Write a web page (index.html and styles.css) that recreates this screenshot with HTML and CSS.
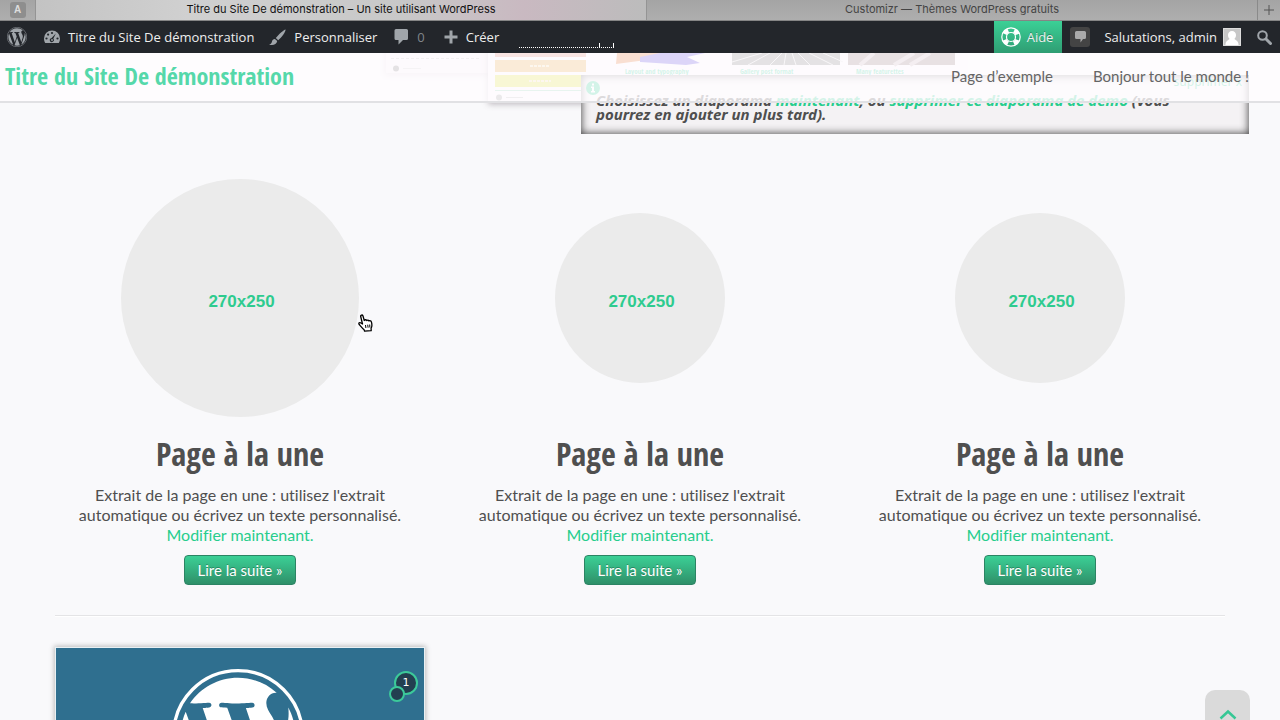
FILE: index.html
```html
<!DOCTYPE html>
<html lang="fr">
<head>
<meta charset="utf-8">
<title>Titre du Site De démonstration – Un site utilisant WordPress</title>
<link rel="stylesheet" href="styles.css">
</head>
<body>
<svg class="symbols" aria-hidden="true">
  <symbol id="wp" viewBox="0 0 24 24">
    <circle cx="12" cy="12" r="11.7" fill="none" stroke="currentColor" stroke-width=".6"/>
    <path fill="currentColor" transform="translate(.42 .42) scale(.965)" d="M21.469 6.825c.84 1.537 1.318 3.3 1.318 5.175 0 3.979-2.156 7.456-5.363 9.325l3.295-9.527c.615-1.54.82-2.771.82-3.864 0-.405-.026-.78-.07-1.11m-7.981.105c.647-.03 1.232-.105 1.232-.105.582-.075.514-.93-.067-.899 0 0-1.755.135-2.88.135-1.064 0-2.85-.15-2.85-.15-.585-.03-.661.855-.075.885 0 0 .54.061 1.125.09l1.68 4.605-2.37 7.08L5.354 6.9c.649-.03 1.234-.1 1.234-.1.585-.075.516-.93-.065-.896 0 0-1.746.138-2.874.138-.2 0-.438-.008-.69-.015C4.911 3.15 8.235 1.215 12 1.215c2.809 0 5.365 1.072 7.286 2.833-.046-.003-.091-.009-.141-.009-1.06 0-1.812.923-1.812 1.914 0 .89.513 1.643 1.06 2.531.411.72.89 1.643.89 2.977 0 .915-.354 1.994-.821 3.479l-1.075 3.585-3.9-11.61zM12 22.784c-1.059 0-2.081-.153-3.048-.437l3.237-9.406 3.315 9.087c.024.053.05.101.078.149-1.12.393-2.325.609-3.582.609M1.211 12c0-1.564.336-3.05.935-4.39L7.29 21.709C3.694 19.96 1.212 16.271 1.211 12"/>
  </symbol>
</svg>

<div class="tabs">
  <div class="tab tab-pinned"><span class="pin">A</span></div>
  <div class="tab tab-active">Titre du Site De démonstration – Un site utilisant WordPress</div>
  <div class="tab">Customizr — Thèmes WordPress gratuits</div>
  <button class="tab-new" aria-label="Nouvel onglet"><svg width="12" height="12" viewBox="0 0 12 12"><path d="M6 1v10M1 6h10" stroke="#555" fill="none"/></svg></button>
</div>

<nav class="adminbar">
  <a href="#" class="ab-logo" aria-label="WordPress"><svg width="20" height="20"><use href="#wp"/></svg></a>
  <a href="#" class="ab-item ab-site">
    <svg width="16" height="16" viewBox="0 0 16 16"><path fill="#a0a5aa" d="M8 1.500a8 8 0 0 0-8 8c0 1.800.5 3.300 1.200 4.500h13.600c.7-1.200 1.200-2.700 1.200-4.500a8 8 0 0 0-8-8z"/><g fill="#23282d"><circle cx="8" cy="4" r="1.100"/><circle cx="4.100" cy="5.600" r="1.100"/><circle cx="2.500" cy="9.500" r="1.100"/><circle cx="13.500" cy="9.500" r="1.100"/><path d="M11.800 4.500 9.300 9.800a2 2 0 1 1-1.900-.6z"/></g><circle cx="8" cy="11" r=".9" fill="#a0a5aa"/></svg>
    Titre du Site De démonstration</a>
  <a href="#" class="ab-item ab-custom">
    <svg width="17" height="17" viewBox="0 0 17 17"><path fill="#a0a5aa" d="M16.600.4c-2 .5-6.900 4.600-9.800 8.700l2.400 2.200C12.700 8 16.700 3 16.600.4zM5.900 9.900c-1.600 0-2.700.9-2.900 2.500C2.800 14 1.700 15.100 0 15.500c3 1.300 7.700.6 8.200-3.400z"/></svg>
    Personnaliser</a>
  <a href="#" class="ab-item ab-comments">
    <svg width="15" height="16" viewBox="0 0 15 16"><path fill="#a0a5aa" d="M2 0h10.500A1.500 1.500 0 0 1 14 1.500v8a1.500 1.500 0 0 1-1.500 1.500H9l-4.500 4.500V11H2A1.500 1.500 0 0 1 .5 9.500v-8A1.500 1.500 0 0 1 2 0z"/></svg>
    <span class="count">0</span></a>
  <a href="#" class="ab-item ab-new">
    <svg width="14" height="14" viewBox="0 0 14 14"><path d="M7 .5v13M.5 7h13" stroke="#a0a5aa" stroke-width="3" fill="none"/></svg>
    Créer</a>
  <svg class="stats" width="96" height="6" viewBox="0 0 96 6" aria-hidden="true"><path d="M0 4.500h95" stroke="#fff" stroke-dasharray="1 1"/><path d="M80.500 0v5M94.500 0v5" stroke="#fff"/></svg>
  <span class="ab-space"></span>
  <a href="#" class="ab-item ab-help">
    <svg width="20" height="20" viewBox="0 0 20 20" fill="none" stroke="#fff"><circle cx="10" cy="10" r="9.200" stroke-width="1.200"/><circle cx="10" cy="10" r="4.500" stroke-width="1.200"/><circle cx="10" cy="10" r="7" stroke-width="4.500" stroke-dasharray="5 5.990" stroke-dashoffset="-3"/></svg>
    Aide</a>
  <a href="#" class="ab-notes" aria-label="Notifications"><svg width="11" height="12" viewBox="0 0 11 12"><path fill="#aaa" d="M1.500 0h8A1.500 1.500 0 0 1 11 1.500v5A1.500 1.500 0 0 1 9.500 8H8l-2.500 3.500V8h-4A1.500 1.500 0 0 1 0 6.500v-5A1.500 1.500 0 0 1 1.500 0z"/></svg></a>
  <a href="#" class="ab-item ab-user">Salutations, admin
    <svg width="18" height="18" viewBox="0 0 18 18"><path fill="#c7c7c7" d="M0 0h18v18H0z"/><path fill="#fff" d="M9 3c2.500 0 4 1.700 4 4 0 1.600-.6 3-1.500 3.800.2 1.200 3.500 1.400 4 5.200v1h-13v-1c.5-3.800 3.800-4 4-5.200C5.600 10 5 8.600 5 7c0-2.300 1.500-4 4-4z"/><path fill="none" stroke="#ddd" d="M.5.5h17v17H.5z"/></svg></a>
  <button class="ab-search" aria-label="Rechercher"><svg width="15" height="15" viewBox="0 0 15 15" fill="none" stroke="#a0a5aa"><circle cx="5.500" cy="5.500" r="4.300" stroke-width="2"/><path d="m9 9 4.500 4.500" stroke-width="3" stroke-linecap="round"/></svg></button>
</nav>

<div class="stage">
  <header class="site-header">
    <a href="#" class="site-title">Titre du Site De démonstration</a>
    <nav class="menu"><a href="#">Page d’exemple</a><a href="#">Bonjour tout le monde !</a></nav>
  </header>
  <svg class="slide" width="590" height="58" viewBox="380 53 590 58" aria-hidden="true">
    <defs>
      <filter id="soft" x="-10%" y="-20%" width="120%" height="150%"><feGaussianBlur stdDeviation="3"/></filter>
    </defs>
    <path fill="#c8b8c4" opacity=".5" filter="url(#soft)" d="M384 40h200v36H384z"/>
    <path fill="#f6eef4" d="M386 40h200v33H386z"/>
    <path stroke="#bbb" stroke-dasharray="3 2" d="M391 58.500h88"/>
    <circle cx="396" cy="68.500" r="3" fill="#777"/><path stroke="#ccc" d="M403 68.500h18"/>
    <path fill="#a8a0a8" opacity=".8" filter="url(#soft)" d="M488 40h470v64H488z"/>
    <path fill="#faf6fa" d="M488 40h480v62H488z"/>
    <path fill="#e08070" d="M495 53h91v4h-91z"/>
    <path fill="#e3a33e" d="M495 60h91v12h-91z"/>
    <path fill="#d9e22e" d="M495 75h91v12h-91z"/>
    <path stroke="#8ecfae" d="M495 90.500h91"/>
    <path stroke="#f4dfb0" stroke-width="2" stroke-dasharray="3 1" d="M530 66h20M529 81h22"/>
    <circle cx="499" cy="97.500" r="3" fill="#999"/><path stroke="#bbb" d="M506 97.500h17"/>
    <path fill="#e06a20" d="M617 53h45l-8 6-38 5z"/>
    <path fill="#5138dc" d="m640 57 20-4h45l-18 4 13 6-14 2-30-2-16-1z"/>
    <path fill="#777" d="M732 53h108v12H732z"/>
    <path stroke="#ddd" d="m732 62 30-9m-14 12 22-12m0 12 12-12m2 12 2-12m10 12-4-12m18 12-12-12m35 12-24-12m34 9-20-9"/>
    <path fill="#8a7476" d="M848 53h107v12H848z"/>
    <path stroke="#c8b4b8" stroke-width="4" d="m860 65 14-12m20 12 20-12m-4 12 20-12"/>
    <g class="captions"><text x="625" y="74">Layout and typography</text><text x="740" y="74">Gallery post format</text><text x="856" y="74">Many featurettes</text></g>
  </svg>
  <aside class="notice">
    <svg class="info" width="14" height="14" viewBox="0 0 14 14"><circle cx="7" cy="7" r="7" fill="#27cd8d"/><path fill="#fff" d="M6 2.500h2v2H6zM5 5.500h3v4.500h1v1.500H5V10h1V7H5z"/></svg>
    <a href="#" class="dismiss">supprimer x</a>
    <p>Choisissez un diaporama <a href="#">maintenant</a>, ou <a href="#">supprimer ce diaporama de demo</a> (vous pourrez en ajouter un plus tard).</p>
  </aside>
</div>

<main class="container">
  <section class="features">
    <article class="feature feature-hover">
      <div class="round-wrap"><div class="round">270x250</div></div>
      <h2>Page à la une</h2>
      <p>Extrait de la page en une : utilisez l'extrait automatique ou écrivez un texte personnalisé. <a href="#">Modifier maintenant.</a></p>
      <a href="#" class="btn">Lire la suite »</a>
      <svg class="cursor" width="16" height="18" viewBox="0 0 16 18"><path fill="#fff" stroke="#000" stroke-width="1.300" stroke-linejoin="round" d="M4.500 10 2.700 2.500C2.400.8 4.500.4 5 2l1.300 4.500c.4-1 2-1 2.400.1.700-.9 2-.6 2.300.4.900-.6 2.200-.2 2.400.9.700 2.500 1 4.300-.3 6.300l.1 2.500-6.600.5-.5-1.500C4.500 14.500 2.500 12 1.200 10.500.2 9 1.800 8 3 9z"/><path stroke="#000" d="m7.500 11 .4 3M9.700 10.700l.4 3M11.700 10.500l.2 3"/></svg>
    </article>
    <article class="feature">
      <div class="round-wrap"><div class="round">270x250</div></div>
      <h2>Page à la une</h2>
      <p>Extrait de la page en une : utilisez l'extrait automatique ou écrivez un texte personnalisé. <a href="#">Modifier maintenant.</a></p>
      <a href="#" class="btn">Lire la suite »</a>
    </article>
    <article class="feature">
      <div class="round-wrap"><div class="round">270x250</div></div>
      <h2>Page à la une</h2>
      <p>Extrait de la page en une : utilisez l'extrait automatique ou écrivez un texte personnalisé. <a href="#">Modifier maintenant.</a></p>
      <a href="#" class="btn">Lire la suite »</a>
    </article>
  </section>
  <hr>
  <section class="posts">
    <article class="post">
      <svg class="post-logo" width="132" height="132"><use href="#wp"/></svg>
      <a href="#" class="bubble">1</a>
    </article>
  </section>
</main>
<a href="#" class="to-top" aria-label="Haut de page"><svg width="18" height="11" viewBox="0 0 18 11"><path d="m1.500 9.500 7.500-7 7.500 7" fill="none" stroke="#36c795" stroke-width="2.500"/></svg></a>
</body>
</html>
```
FILE: styles.css
```css
* { box-sizing: border-box; }
body {
  margin: 0;
  height: 100vh;
  overflow: hidden;
  background: #f9f9fb;
  color: #4f4f4f;
  font: 16px/20px Lato, sans-serif;
  font-variant-ligatures: none;
}
a { color: #27cd8d; text-decoration: none; }
button { border: 0; padding: 0; background: none; }
.symbols { position: absolute; width: 0; height: 0; }

.tabs {
  display: flex;
  height: 21px;
  background: linear-gradient(#a4a4a4, #aeaeae);
  border-bottom: 1px solid #858585;
  font: 11px/19px Inter, sans-serif;
  color: #444;
}
.tab { flex: 1; text-align: center; }
.tab-pinned { flex: 0 0 36px; display: flex; justify-content: center; align-items: center; border-right: 1px solid #949494; }
.pin { width: 16px; height: 16px; border-radius: 3px; background: #8e8e8e; color: #ddd; font: bold 10px/16px "Liberation Sans", sans-serif; }
.tab-active {
  background: linear-gradient(90deg, #c3c3c3, #d0d0d0 25%, #c8c8c8 60%, #c9b9c1 80%, #bcbcbc);
  border-right: 1px solid #949494;
  color: #111;
}
.tab-new { width: 23px; border-left: 1px solid #8a8a8a; display: flex; align-items: center; justify-content: center; }

.adminbar {
  display: flex;
  align-items: center;
  height: 32px;
  background: #23262b;
  font: 13px/32px "Open Sans", sans-serif;
}
.adminbar a { color: #eee; }
.ab-item { display: flex; align-items: center; gap: 8px; }
.ab-logo { display: flex; margin: 0 17px 0 7px; }
.adminbar .ab-logo { color: #a0a5aa; }
.ab-custom { margin-left: 15px; }
.ab-comments { margin-left: 17px; }
.ab-new { margin-left: 19px; }
.count { color: #80858a; }
.stats { align-self: flex-end; margin: 0 0 4px 20px; }
.ab-space { flex: 1; }
.ab-help { height: 32px; gap: 6px; padding: 0 9px 0 7px; background: linear-gradient(#3bd096, #2f9d73); text-shadow: 0 -1px 0 #0004; }
.ab-notes { display: flex; align-items: center; justify-content: center; width: 20px; height: 20px; margin: 0 14px 0 8px; border-radius: 3px; background: #444; }
.ab-user { gap: 6px; }
.ab-search { display: flex; margin: 0 8px 0 16px; }

.stage { position: relative; height: 81px; overflow: hidden; }
.site-header {
  position: absolute;
  inset: 0 0 auto;
  z-index: 2;
  display: flex;
  justify-content: space-between;
  align-items: center;
  height: 50px;
  padding: 0 31px 2px 5px;
  background: #fffdffcc;
  border-bottom: 2px solid #e1e1e4;
}
.site-title { color: #55d8aa; font: bold 24px/40px "Open Sans Condensed", "Roboto Condensed", sans-serif; }
.menu { display: flex; gap: 40px; font-size: 15px; }
.menu a { color: #656565; }
.slide { position: absolute; left: 380px; top: 0; }
.captions { fill: #27cd8d; font: bold 7px "Open Sans Condensed", sans-serif; }
.notice {
  position: absolute;
  left: 581px;
  right: 31px;
  top: 22px;
  bottom: 0;
  padding: 18px 40px 0 15px;
  background: #f4f2f4;
  box-shadow: inset 0 0 8px #333;
  font: italic bold 15px/14px "Noto Sans", sans-serif;
}
.notice p { margin: 0; }
.info { position: absolute; left: 5px; top: 6px; }
.dismiss { position: absolute; right: 7px; top: 0; font: 12px/14px "Noto Sans", sans-serif; }

.container { width: 100%; max-width: 1170px; margin: 0 auto; }
.features { display: grid; grid-template-columns: repeat(3, 1fr); gap: 30px; padding-top: 45px; }
.feature { position: relative; text-align: center; }
.round-wrap { display: flex; align-items: center; justify-content: center; height: 238px; }
.round {
  width: 170px;
  height: 170px;
  padding: 8px 0 0 3px;
  border-radius: 50%;
  background: #ebebeb;
  color: #2ecb8f;
  display: flex;
  align-items: center;
  justify-content: center;
  font: bold 17px/20px "Liberation Sans", sans-serif;
}
.feature-hover .round { width: 238px; height: 238px; }
.feature h2 { margin: 17px 0 11px; font: bold 32px/40px "Open Sans Condensed", "Roboto Condensed", sans-serif; }
.feature p { margin: 0 20px 10px; }
.feature p a { display: block; }
.btn {
  display: inline-block;
  padding: 4px 12px;
  border: 1px solid #2c8464;
  border-radius: 4px;
  background: linear-gradient(#3bd096, #2f9069);
  color: #fff;
  font-size: 15px;
  text-shadow: 0 -1px 0 #0004;
}
.cursor { position: absolute; left: 303px; top: 135px; }
hr { margin: 30px 0; border: 0; border-top: 1px solid #e4e4e6; border-bottom: 1px solid #fff; }
.posts { display: grid; grid-template-columns: repeat(3, 1fr); gap: 30px; }
.post { position: relative; height: 245px; border: 1px solid #e8f0f4; background: #2f6f8f; box-shadow: 0 0 5px 1px #bbb; text-align: center; }
.post-logo { margin: 21px 4px 0 0; color: #fff; }
.bubble {
  position: absolute;
  right: 6px;
  top: 23px;
  width: 24px;
  height: 24px;
  border: 2px solid #3cc99a;
  border-radius: 50%;
  background: #233f50;
  color: #fff;
  font: 11px/20px "DejaVu Sans", sans-serif;
}
.bubble::after {
  content: "";
  position: absolute;
  left: -7px;
  top: 13px;
  width: 12px;
  height: 12px;
  border: 2px solid #3cc99a;
  border-radius: 50%;
  background: #233f50;
}
.to-top {
  position: fixed;
  right: 30px;
  bottom: -15px;
  width: 45px;
  height: 45px;
  padding-top: 19px;
  border-radius: 10px;
  background: #dadada;
  display: flex;
  justify-content: center;
}
```
